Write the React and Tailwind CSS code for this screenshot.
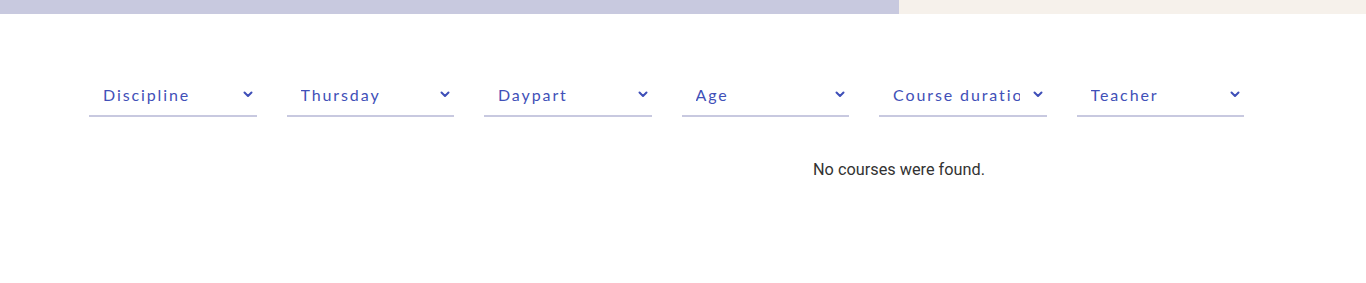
import React from 'react';

const filters = ['Discipline', 'Thursday', 'Daypart', 'Age', 'Course duration', 'Teacher'];

function Chevron() {
  return (
    <svg width="10" height="7" viewBox="0 0 10 7" className="shrink-0">
      <path d="M1.5 1.5 L5 5 L8.5 1.5" fill="none" stroke="#3f4fb8" strokeWidth="2" strokeLinecap="round" strokeLinejoin="round" />
    </svg>
  );
}

function FilterSelect({ label }) {
  return (
    <button className="flex items-center justify-between h-[46px] pl-[14px] pr-[4px] pt-[3px] border-b-2 border-[#c8c9e0] text-left">
      <span className="overflow-hidden whitespace-nowrap w-[127px] text-[16px] tracking-[1.9px] text-[#4150b8] font-['Lato',sans-serif]">
        {label}
      </span>
      <Chevron />
    </button>
  );
}

function App() {
  return (
    <div className="w-full h-[283px] bg-white">
      <div className="flex h-[14px]">
        <div className="w-[899px] bg-[#c8c9df]"></div>
        <div className="flex-1 bg-[#f6f1eb]"></div>
      </div>

      <div className="ml-[89px] mt-[57px] grid grid-cols-6 gap-x-[30px] w-[1155px]">
        {filters.map(f => (
          <FilterSelect key={f} label={f} />
        ))}
      </div>

      <p className="mt-[41px] ml-[813px] text-[16.3px] text-[#333333] font-['Roboto',sans-serif]">
        No courses were found.
      </p>
    </div>
  );
}

export default App;
